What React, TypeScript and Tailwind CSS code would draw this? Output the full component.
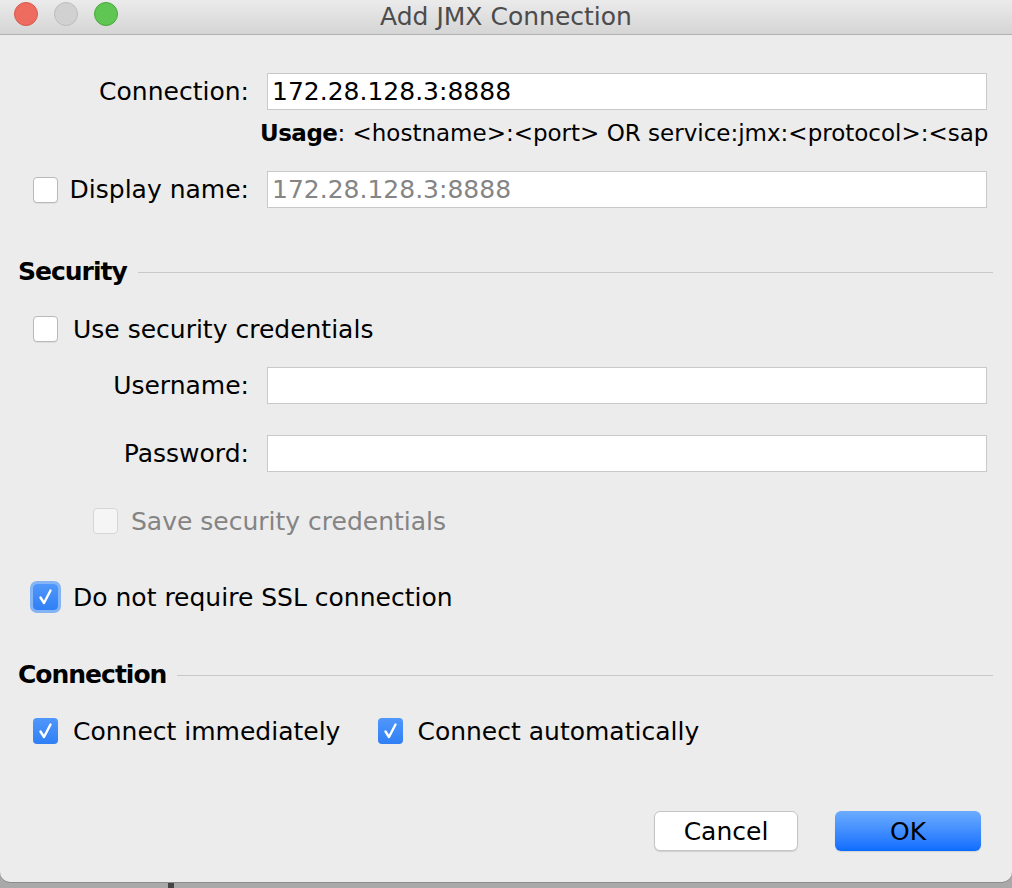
import { ReactNode } from "react";

const font = { fontFamily: '"DejaVu Sans", Verdana, sans-serif' };

function Check({ checked, disabled, focus }: { checked?: boolean; disabled?: boolean; focus?: boolean }) {
  if (checked) {
    return (
      <div
        className={
          "flex h-[26px] w-[25px] shrink-0 items-center justify-center rounded-[4px] bg-gradient-to-b from-[#4f97fb] to-[#2f7ff5] " +
          (focus ? "ring-[3px] ring-[#84b4f4]" : "")
        }
      >
        <svg width="25" height="26" viewBox="0 0 25 26">
          <path d="M7.5 13.5 L11 19 L17.5 6.5" fill="none" stroke="white" strokeWidth="2.4" strokeLinecap="round" strokeLinejoin="round" />
        </svg>
      </div>
    );
  }
  return (
    <div
      className={
        "h-[26px] w-[25px] shrink-0 rounded-[4px] border " +
        (disabled ? "border-[#d6d6d6] bg-[#f5f5f5]" : "border-[#b9b9b9] bg-white shadow-[0_1px_0_rgba(0,0,0,0.06)]")
      }
    />
  );
}

function Field({ value, muted }: { value?: string; muted?: boolean }) {
  return (
    <div
      className={
        "flex h-[37px] w-[720px] items-center border border-[#c9c9c9] bg-white pl-[4px] pt-[1px] " +
        (muted ? "text-[#858585]" : "text-black")
      }
    >
      {value}
    </div>
  );
}

function Header({ title }: { title: string }) {
  return (
    <div className="flex h-[30px] items-center pl-[18px] pr-[19px]">
      <span className="font-bold tracking-[-1px]">{title}</span>
      <div className="ml-[11px] h-px flex-1 bg-[#c8c8c8]" />
    </div>
  );
}

function Row({ label, children, mt }: { label: ReactNode; children: ReactNode; mt: string }) {
  return (
    <div className={"flex h-[37px] items-center " + mt}>
      <div className="flex w-[249px] shrink-0 items-center justify-end pt-[1px]">{label}</div>
      <div className="ml-[18px]">{children}</div>
    </div>
  );
}

export default function App() {
  return (
    <div className="h-[888px] w-[1012px] overflow-hidden bg-[#a9a9a9] text-[25px] text-black" style={font}>
      <div className="relative h-[882px] overflow-hidden rounded-b-[10px] bg-[#ececec] shadow-[0_1px_0_#8c8c8c]">
        <div className="relative flex h-[35px] items-center justify-center border-b border-[#b1b1b1] bg-gradient-to-b from-[#ebebeb] to-[#d5d5d5]">
          <div className="absolute left-[14px] top-[2px] flex gap-[16px]">
            <div className="h-[24px] w-[24px] rounded-full border border-[#d85a50] bg-[#ee6b60]" />
            <div className="h-[24px] w-[24px] rounded-full border border-[#bdbdbd] bg-[#d1d1d1]" />
            <div className="h-[24px] w-[24px] rounded-full border border-[#4aa73f] bg-[#5fc553]" />
          </div>
          <span className="text-[#4b4b4b]">Add JMX Connection</span>
        </div>

        <Row label={<span>Connection:</span>} mt="mt-[38px]">
          <Field value="172.28.128.3:8888" />
        </Row>
        <div className="mt-[8px] flex h-[30px] items-center pl-[260px]">
          <div className="w-[733px] overflow-hidden whitespace-nowrap pt-[1px] text-[23px]">
            <span className="font-bold tracking-[-0.5px]">Usage</span>
            <span>: &lt;hostname&gt;:&lt;port&gt; OR service:jmx:&lt;protocol&gt;:&lt;sap</span>
          </div>
        </div>
        <Row
          label={
            <div className="flex w-full items-center pl-[33px]">
              <Check />
              <span className="ml-auto">Display name:</span>
            </div>
          }
          mt="mt-[23px]"
        >
          <Field value="172.28.128.3:8888" muted />
        </Row>

        <div className="mt-[49px]">
          <Header title="Security" />
        </div>
        <div className="mt-[27px] flex h-[30px] items-center pl-[33px]">
          <Check />
          <span className="ml-[15px] pt-[1px]">Use security credentials</span>
        </div>
        <Row label={<span>Username:</span>} mt="mt-[23px]">
          <Field />
        </Row>
        <Row label={<span>Password:</span>} mt="mt-[31px]">
          <Field />
        </Row>
        <div className="mt-[34px] flex h-[30px] items-center pl-[93px]">
          <Check disabled />
          <span className="ml-[13px] pt-[1px] text-[#848484]">Save security credentials</span>
        </div>
        <div className="mt-[46px] flex h-[30px] items-center pl-[33px]">
          <Check checked focus />
          <span className="ml-[15px] pt-[1px]">Do not require SSL connection</span>
        </div>

        <div className="mt-[48px]">
          <Header title="Connection" />
        </div>
        <div className="mt-[26px] flex h-[30px] items-center pl-[33px]">
          <Check checked />
          <span className="ml-[15px] pt-[1px]">Connect immediately</span>
          <div className="ml-[38px]">
            <Check checked />
          </div>
          <span className="ml-[14px] pt-[1px]">Connect automatically</span>
        </div>

        <div className="mt-[65px] flex justify-end gap-[37px] pr-[31px]">
          <button className="flex h-[40px] w-[144px] items-center justify-center rounded-[6px] border border-[#c4c4c4] bg-white pt-[1px] shadow-[0_1px_1px_rgba(0,0,0,0.12)]">
            Cancel
          </button>
          <button className="flex h-[40px] w-[146px] items-center justify-center rounded-[6px] bg-gradient-to-b from-[#6babff] to-[#0a6cff] pt-[1px] shadow-[0_1px_1px_rgba(0,0,0,0.12)]">
            OK
          </button>
        </div>
      </div>
      <div className="ml-[168px] h-[6px] w-[6px] bg-[#454545]" />
    </div>
  );
}
